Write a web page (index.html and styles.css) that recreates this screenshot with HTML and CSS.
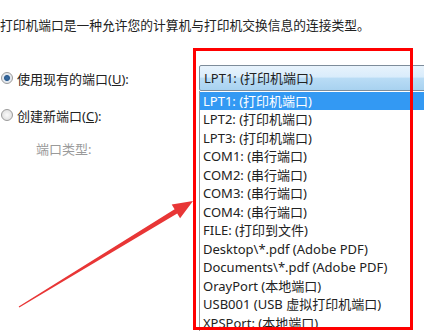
FILE: index.html
```html
<!DOCTYPE html>
<html lang="zh-CN">
<head>
  <meta charset="UTF-8">
  <title>打印机端口</title>
  <link rel="stylesheet" href="styles.css">
</head>
<body>
  <div class="dialog">
    <p class="intro">打印机端口是一种允许您的计算机与打印机交换信息的连接类型。</p>

    <div class="row">
      <span class="radio checked"></span>
      <span class="label">使用现有的端口(<u>U</u>):</span>
      <div class="combo">
        <div class="combo-value">LPT1: (打印机端口)</div>
        <ul class="combo-list">
          <li class="selected">LPT1: (打印机端口)</li>
          <li>LPT2: (打印机端口)</li>
          <li>LPT3: (打印机端口)</li>
          <li>COM1: (串行端口)</li>
          <li>COM2: (串行端口)</li>
          <li>COM3: (串行端口)</li>
          <li>COM4: (串行端口)</li>
          <li>FILE: (打印到文件)</li>
          <li>Desktop\*.pdf (Adobe PDF)</li>
          <li>Documents\*.pdf (Adobe PDF)</li>
          <li>OrayPort (本地端口)</li>
          <li>USB001 (USB 虚拟打印机端口)</li>
          <li>XPSPort: (本地端口)</li>
        </ul>
      </div>
    </div>

    <div class="row second">
      <span class="radio"></span>
      <span class="label">创建新端口(<u>C</u>):</span>
    </div>
    <div class="port-type">端口类型:</div>

    <!-- 标注：红框和箭头 -->
    <div class="mark-box"></div>
    <svg class="mark-arrow" viewBox="0 0 424 331" width="424" height="331">
      <polygon fill="#e83636" points="18.7,306.5 174.6,209.3 171.7,204.6 193,201 180.1,218.2 177.2,213.5 19.3,307.5"/>
    </svg>
  </div>
</body>
</html>
```

FILE: styles.css
```css
body{
  margin: 0; background: #fff; overflow: hidden;
  font-family: "Noto Sans", "Noto Sans CJK SC", sans-serif;
  color: #222;
}
.dialog{
  position: relative; width: 424px; height: 331px; overflow: hidden;
}
.intro{
  margin: 16px 0 0 0; font-size: 12.75px; line-height: 18px;
  white-space: nowrap;
}
.row{
  display: flex; align-items: center; margin-top: 31px; height: 26px;
  font-size: 13px;
}
.row.second{
  margin-top: 15px; height: 18px;
}
.radio{
  flex-shrink: 0;
  width: 10px; height: 10px; margin-left: 1px; border-radius: 50%;
  border: 1px solid #9a9a9a;
  background: radial-gradient(circle, #fafafa 0, #d8d8d8 100%);
}
.radio.checked{
  background: radial-gradient(circle, #3a6ea5 0, #2a5b8f 2.5px, #dfe6ee 3.5px, #f4f4f4 100%);
}
.label{
  flex-shrink: 0;
  margin-left: 4px; width: 182px; white-space: nowrap;
}
.label u{
  text-decoration: underline;
}
.combo{
  flex-shrink: 0;
  position: relative; width: 260px; height: 26px;
}
.combo-value{
  box-sizing: border-box; height: 26px; padding: 3px 4px;
  border: 1px solid #7d8c9a; border-radius: 2px;
  background: linear-gradient(#e8f3fc 0, #d9ecfb 45%, #b9dcf5 52%, #a8d2f0 100%);
  line-height: 18px; white-space: nowrap;
}
.combo-list{
  position: absolute; top: 26px; left: 0; width: 100%;
  margin: 0; padding: 0; list-style: none;
  background: #fff; border-left: 1px solid #9a9a9a;
}
.combo-list li{
  height: 18.5px; line-height: 18.5px; padding-left: 3px; white-space: nowrap;
}
.combo-list li:first-child{
  margin-top: 0.5px;
}
.combo-list li.selected{
  background: #3399f3; color: #fff;
}
.port-type{
  margin: 16px 0 0 36px; font-size: 13px; line-height: 18px; color: #9a9a9a;
}
.mark-box{
  position: absolute; left: 193px; top: 48px; width: 214px; height: 276px;
  border: 3px solid #ff0000;
}
.mark-arrow{
  position: absolute; left: 0; top: 0;
}
```
